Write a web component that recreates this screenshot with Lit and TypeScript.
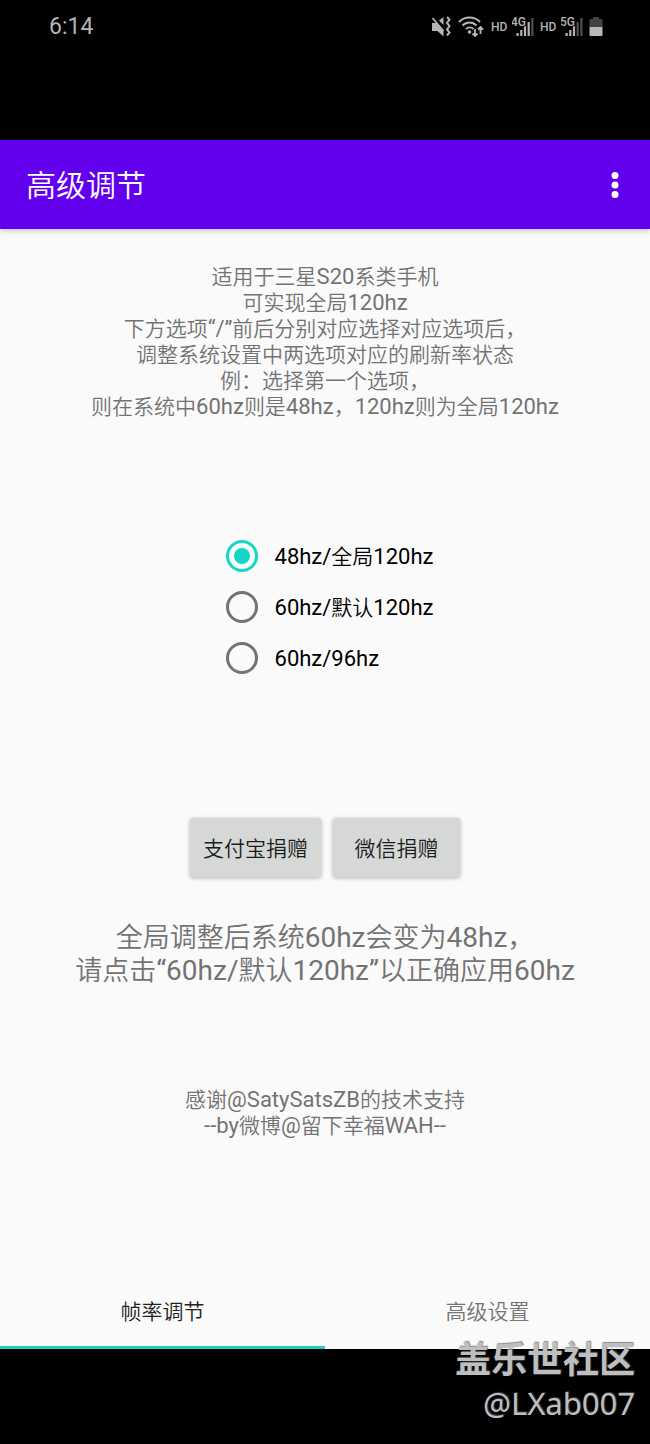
import { LitElement, html, css, svg } from "lit";
import { customElement, state } from "lit/decorators.js";
import { classMap } from "lit/directives/class-map.js";

const FONT = css`Roboto, "Noto Sans CJK SC", sans-serif`;

// Latin runs are set one pixel larger than the Chinese text around them.
const mixed = (text: string) =>
  text
    .split(/([\x20-\x7e“”]+)/)
    .filter((part) => part !== "")
    .map((part) => (/^[\x20-\x7e“”]/.test(part) ? html`<span class="latin">${part}</span>` : part));

const lines = (rows: string[]) => rows.map((row, i) => html`${i ? html`<br />` : ""}${mixed(row)}`);

@customElement("status-bar")
class StatusBar extends LitElement {
  static styles = css`
    :host {
      display: block;
      box-sizing: border-box;
      height: 140px;
      padding: 12px 47px 0 49px;
      background: #000;
      color: #b4b4b4;
      font-family: ${FONT};
      font-weight: 400;
    }
    .row {
      display: flex;
      align-items: center;
      justify-content: space-between;
      height: 30px;
    }
    .time {
      font-size: 23px;
      line-height: 30px;
    }
    .icons {
      display: flex;
      align-items: center;
    }
    .mute,
    .wifi {
      margin-right: 7px;
    }
    .hd {
      width: 18px;
      margin-right: 3px;
      font-size: 12px;
      line-height: 24px;
      font-weight: 500;
    }
    .signal {
      margin-right: 6px;
    }
    svg {
      display: block;
    }
    text {
      font-size: 12px;
      font-weight: 500;
    }
  `;

  private signal(label: string, lit: number) {
    const bars = [3, 6, 10, 14, 18];
    return html`<svg class="signal" width="22" height="24" viewBox="0 0 22 24" fill="#b4b4b4">
      ${bars.map(
        (h, i) => svg`<rect x=${4.5 + i * 3.7} y=${21 - h} width="2.2" height=${h}
          fill=${i < lit ? "#b4b4b4" : "#505050"} />`
      )}
      <text x="-1" y="11" stroke="#000" stroke-width="2" paint-order="stroke">${label}</text>
    </svg>`;
  }

  render() {
    return html`
      <div class="row">
        <span class="time">6:14</span>
        <div class="icons">
          <svg class="mute" width="20" height="24" viewBox="0 0 20 24" fill="#b4b4b4">
            <path d="M1 8h5l6.500 7v6.500l-6-5.500H1z M8 5.500l4.500-3.500v8z" />
            <path d="M1.500 3L12.500 16" stroke="#b4b4b4" stroke-width="1.800" fill="none" />
            <path d="M16 2l2.500 2.500-2.500 3.500 2.500 3-2.500 3.500 2.500 3-2.500 3" stroke="#b4b4b4" stroke-width="2" fill="none" />
          </svg>
          <svg class="wifi" width="26" height="24" viewBox="0 0 26 24" fill="none" stroke="#b4b4b4" stroke-width="2">
            <path d="M1 7a14.500 14.500 0 0 1 21 0M4.500 10.500a9.500 9.500 0 0 1 14 0M8 14a5.500 5.500 0 0 1 7.500 0" />
            <circle cx="11.500" cy="17" r="1.800" fill="#b4b4b4" stroke="none" />
            <path d="M17 14v7M14.500 18.500l2.500 2.500 2.500-2.500M22.500 19v-7M20 14.500l2.500-2.500 2.500 2.500" stroke-width="1.800" />
          </svg>
          <span class="hd">HD</span>
          ${this.signal("4G", 4)}
          <span class="hd">HD</span>
          ${this.signal("5G", 3)}
          <svg width="14" height="20" viewBox="0 0 14 20">
            <path d="M4 0h6v2h2.500q1 0 1 1v7H.500V3q0-1 1-1H4z" fill="#424242" />
            <path d="M.500 10h13v8q0 1-1 1h-11q-1 0-1-1z" fill="#b8b8b8" />
          </svg>
        </div>
      </div>
    `;
  }
}

@customElement("app-root")
class AppRoot extends LitElement {
  @state() private rate = 0;
  @state() private tab = 0;

  private rates = ["48hz/全局120hz", "60hz/默认120hz", "60hz/96hz"];
  private tabs = ["帧率调节", "高级设置"];
  private intro = [
    "适用于三星S20系类手机",
    "可实现全局120hz",
    "下方选项“/”前后分别对应选择对应选项后，",
    "调整系统设置中两选项对应的刷新率状态",
    "例：选择第一个选项，",
    "则在系统中60hz则是48hz，120hz则为全局120hz",
  ];
  private notice = ["全局调整后系统60hz会变为48hz，", "请点击“60hz/默认120hz”以正确应用60hz"];
  private thanks = ["感谢@SatySatsZB的技术支持", "--by微博@留下幸福WAH--"];

  static styles = css`
    :host {
      display: flex;
      flex-direction: column;
      position: relative;
      min-height: 100vh;
      background: #fafafa;
      color: #737373;
      font-family: ${FONT};
      font-weight: 350;
    }
    .appbar {
      display: flex;
      align-items: center;
      justify-content: space-between;
      box-sizing: border-box;
      height: 89px;
      padding: 2px 26px 0;
      background: #6200ee;
      box-shadow: 0 2px 5px rgba(0, 0, 0, 0.2);
      color: #fff;
    }
    h1 {
      margin: 0;
      font-size: 30px;
      line-height: 40px;
      font-weight: 350;
    }
    button {
      font: inherit;
      border: 0;
      cursor: pointer;
    }
    .more {
      display: grid;
      place-items: center;
      width: 18px;
      height: 44px;
      padding: 0 0 2px;
      background: none;
      color: #fff;
    }
    main {
      flex: 1;
      display: flex;
      flex-direction: column;
      align-items: center;
      padding-top: 35px;
      text-align: center;
    }
    p {
      margin: 0;
      font-size: 21px;
      line-height: 26px;
    }
    .latin {
      font-size: 22px;
      font-weight: 400;
      line-height: 1;
    }
    .rates {
      display: grid;
      grid-auto-rows: 51px;
      margin: 110px 0 135px;
      padding: 0 0 0 9px;
      border: 0;
    }
    .rate {
      display: flex;
      align-items: center;
      gap: 17px;
      color: #000;
      font-size: 21px;
      line-height: 30px;
      cursor: pointer;
    }
    .rate > span {
      padding-top: 3px;
    }
    .rate input {
      appearance: none;
      display: grid;
      place-items: center;
      box-sizing: border-box;
      width: 32px;
      height: 32px;
      margin: 0;
      border: 3px solid #737373;
      border-radius: 50%;
    }
    .rate input:checked {
      border-color: #14d6c4;
    }
    .rate input:checked::before {
      content: "";
      width: 16px;
      height: 16px;
      border-radius: 50%;
      background: #14d6c4;
    }
    .donate {
      display: flex;
      gap: 12px;
      margin-bottom: 45px;
    }
    .donate button {
      min-width: 127px;
      height: 59px;
      padding: 0 13px 2px;
      border-radius: 3px;
      background: #d6d8d7;
      box-shadow: 0 1px 4px rgba(0, 0, 0, 0.3);
      color: #1c1c1c;
      font-size: 21px;
    }
    .notice {
      margin-bottom: 99px;
      font-size: 27px;
      line-height: 33px;
    }
    .notice .latin {
      font-size: 28px;
    }
    .tabs {
      display: flex;
      height: 75px;
    }
    .tab {
      flex: 1;
      padding: 0;
      border-bottom: 3px solid transparent;
      background: none;
      color: #757575;
      font-size: 21px;
    }
    .tab.active {
      border-color: #1fcfc0;
      color: #212121;
    }
    .navbar {
      height: 95px;
      background: #000;
    }
    .watermark {
      position: absolute;
      right: 15px;
      bottom: 18px;
      color: #bebebe;
      text-align: right;
      text-shadow: 1px -1px 1px rgba(90, 90, 90, 0.7);
      pointer-events: none;
    }
    .community {
      font-size: 36px;
      line-height: 38px;
      font-weight: 700;
    }
    .user {
      font-family: "Noto Sans", sans-serif;
      font-size: 31px;
      line-height: 46px;
      font-weight: 400;
    }
  `;

  render() {
    return html`
      <status-bar></status-bar>
      <header class="appbar">
        <h1>高级调节</h1>
        <button class="more" aria-label="更多">
          <svg width="8" height="28" viewBox="0 0 8 28" fill="#fff">
            <circle cx="4" cy="4.500" r="3.500" />
            <circle cx="4" cy="14" r="3.500" />
            <circle cx="4" cy="23.500" r="3.500" />
          </svg>
        </button>
      </header>
      <main>
        <p>${lines(this.intro)}</p>
        <fieldset class="rates" aria-label="刷新率">
          ${this.rates.map(
            (name, i) => html`<label class="rate">
              <input type="radio" name="rate" .checked=${this.rate === i} @change=${() => (this.rate = i)} />
              <span>${mixed(name)}</span>
            </label>`
          )}
        </fieldset>
        <div class="donate">
          <button>支付宝捐赠</button>
          <button>微信捐赠</button>
        </div>
        <p class="notice">${lines(this.notice)}</p>
        <p>${lines(this.thanks)}</p>
      </main>
      <nav class="tabs" role="tablist">
        ${this.tabs.map(
          (name, i) => html`<button
            role="tab"
            aria-selected=${this.tab === i}
            class=${classMap({ tab: true, active: this.tab === i })}
            @click=${() => (this.tab = i)}
          >${name}</button>`
        )}
      </nav>
      <div class="navbar"></div>
      <div class="watermark">
        <div class="community">盖乐世社区</div>
        <div class="user">@LXab007</div>
      </div>
    `;
  }
}
